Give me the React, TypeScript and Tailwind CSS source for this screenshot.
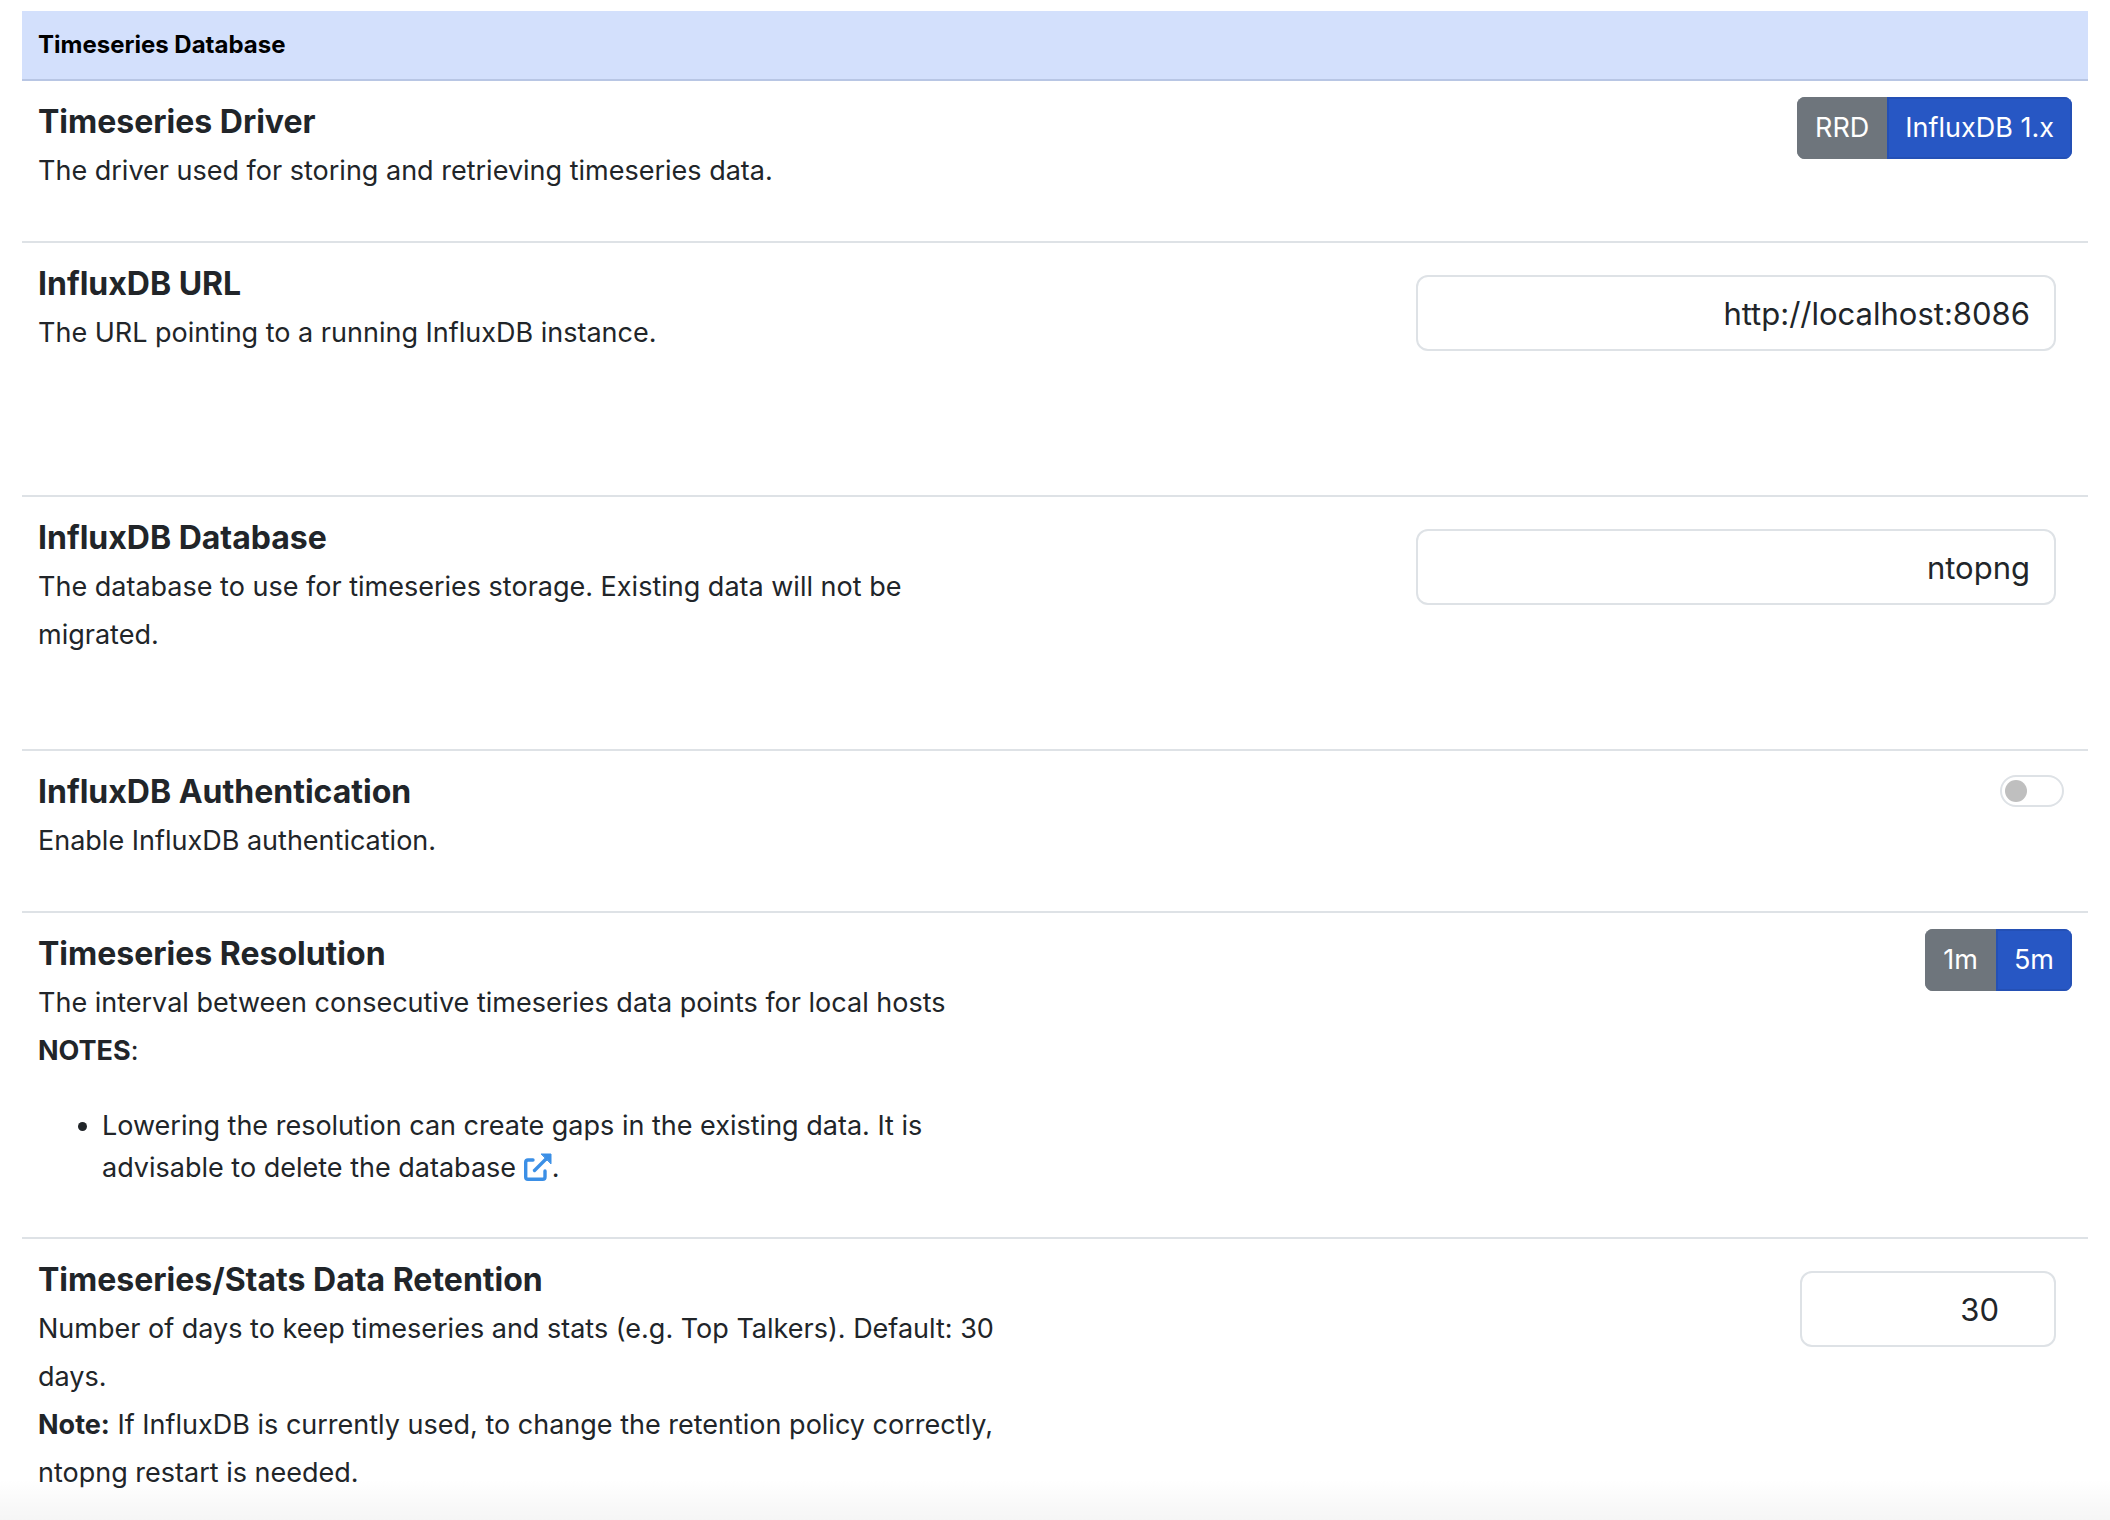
import { useState, type ReactNode } from "react";

type SettingProps = {
  title: string;
  controlId?: string;
  tall?: boolean;
  control: ReactNode;
  children: ReactNode;
};

function Setting({ title, controlId, tall, control, children }: SettingProps) {
  return (
    <section className={`flex items-start justify-between border-b-2 border-[#dee2e6] px-4 pt-4 last-of-type:border-b-0 ${tall ? "min-h-[254px] pb-4" : "pb-[46px]"}`}>
      <div className="max-w-[980px]">
        <h2 className="text-[32px] leading-[50px] font-bold">
          {controlId ? <label htmlFor={controlId}>{title}</label> : title}
        </h2>
        <div className="text-[27px] leading-[48px]">{children}</div>
      </div>
      {control}
    </section>
  );
}

function Choice({ label, options, initial }: { label: string; options: string[]; initial: string }) {
  const [value, setValue] = useState(initial);
  return (
    <div role="group" aria-label={label} className="flex shrink-0 overflow-hidden rounded-lg">
      {options.map((o) => (
        <button
          key={o}
          type="button"
          aria-pressed={o === value}
          onClick={() => setValue(o)}
          className={`border-2 px-4 py-2 text-[27px] leading-[42px] text-white ${o === value ? "border-[#2450b5] bg-[#2757c4]" : "border-[#6e757c] bg-[#6e757c]"}`}
        >
          {o}
        </button>
      ))}
    </div>
  );
}

function TextField({ id, initial }: { id: string; initial: string }) {
  return (
    <input
      id={id}
      type="text"
      defaultValue={initial}
      className="m-4 h-[76px] w-[640px] shrink-0 rounded-xl border-2 border-[#dee2e6] bg-white px-6 text-right text-[31px]"
    />
  );
}

export default function App() {
  const [auth, setAuth] = useState(false);
  return (
    <div className="relative min-h-screen overflow-hidden bg-white px-[22px] pt-[11px] font-[Inter,sans-serif] text-[#212529]">
      <header className="border-b-2 border-[#b8c6e4] bg-[#d3e0fc] px-4 py-4 text-black">
        <h1 className="text-2xl leading-9 font-bold">Timeseries Database</h1>
      </header>

      <Setting title="Timeseries Driver" control={<Choice label="Timeseries Driver" options={["RRD", "InfluxDB 1.x"]} initial="InfluxDB 1.x" />}>
        The driver used for storing and retrieving timeseries data.
      </Setting>
      <Setting title="InfluxDB URL" controlId="influx-url" tall control={<TextField id="influx-url" initial="http://localhost:8086" />}>
        The URL pointing to a running InfluxDB instance.
      </Setting>
      <Setting title="InfluxDB Database" controlId="influx-db" tall control={<TextField id="influx-db" initial="ntopng" />}>
        The database to use for timeseries storage. Existing data will not be migrated.
      </Setting>
      <Setting
        title="InfluxDB Authentication"
        controlId="influx-auth"
        control={
          <input
            id="influx-auth"
            type="checkbox"
            role="switch"
            checked={auth}
            onChange={(e) => setAuth(e.target.checked)}
            className="m-2 h-8 w-16 shrink-0 appearance-none rounded-full border-2 border-[#dee2e6] bg-white p-[3px] before:block before:size-[22px] before:rounded-full before:bg-[#bfbfbf] checked:bg-[#2757c4] checked:before:ml-8 checked:before:bg-white"
          />
        }
      >
        Enable InfluxDB authentication.
      </Setting>
      <Setting title="Timeseries Resolution" control={<Choice label="Timeseries Resolution" options={["1m", "5m"]} initial="5m" />}>
        <p>The interval between consecutive timeseries data points for local hosts</p>
        <p><b>NOTES</b>:</p>
        <ul className="mt-[30px] mb-0.5 list-disc pl-16 leading-[42px]">
          <li>
            Lowering the resolution can create gaps in the existing data. It is advisable to delete the database{" "}
            <a href="#delete" aria-label="Delete the database" className="text-[#3b8fe6]">
              <svg viewBox="0 0 28 28" className="inline size-7 align-[-4px]" fill="none" stroke="currentColor" strokeWidth="3.4" strokeLinecap="round" strokeLinejoin="round">
                <path d="M9 7H4Q1.700 7 1.700 9.300V24Q1.700 26.300 4 26.300H18.700Q21 26.300 21 24V18" />
                <path d="M10.500 17.500 L22 6" />
                <path d="M17.500 1H27V10.500Z" strokeWidth="1" fill="currentColor" />
              </svg>
            </a>.
          </li>
        </ul>
      </Setting>
      <Setting
        title="Timeseries/Stats Data Retention"
        controlId="retention"
        control={
          <input
            id="retention"
            type="number"
            defaultValue={30}
            className="m-4 h-[76px] w-64 shrink-0 rounded-xl border-2 border-[#dee2e6] bg-white pr-10 pl-6 text-right text-[31px]"
          />
        }
      >
        <p>Number of days to keep timeseries and stats (e.g. Top Talkers). Default: 30 days.</p>
        <p><b>Note:</b> If InfluxDB is currently used, to change the retention policy correctly, ntopng restart is needed.</p>
      </Setting>
      <div className="pointer-events-none absolute inset-x-0 bottom-0 h-16 bg-linear-to-t from-black/6 to-transparent" />
    </div>
  );
}
